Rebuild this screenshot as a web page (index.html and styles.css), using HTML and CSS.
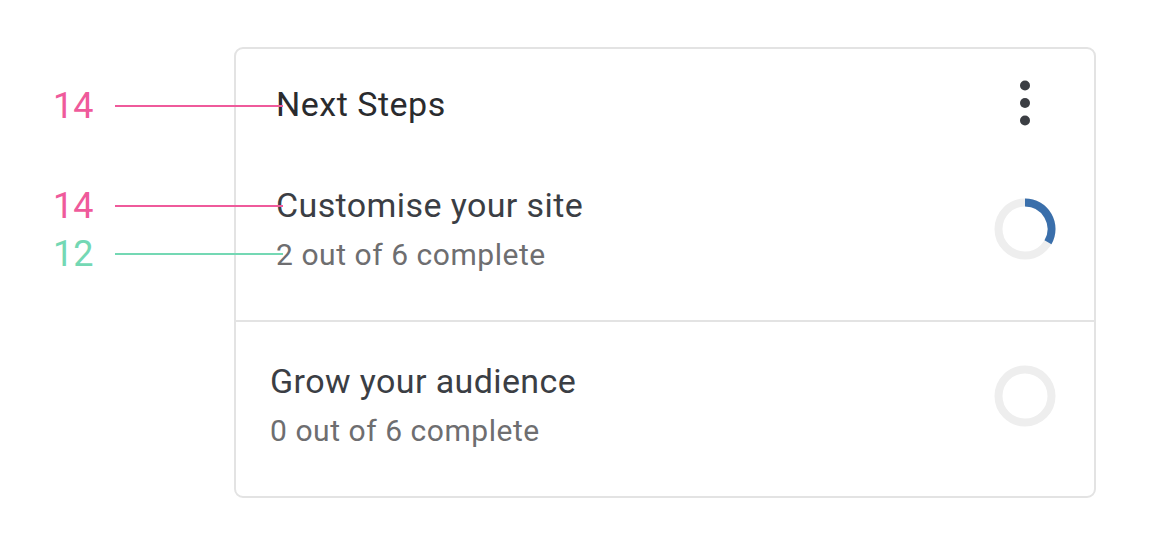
FILE: index.html
```html
<!DOCTYPE html>
<html lang="en">
  <head>
    <meta charset="UTF-8" />
    <title>Next Steps card</title>
    <link rel="stylesheet" href="styles.css">
  </head>
  <body>
    <!-- Card -->
    <section class="card">
      <header class="card-header">
        <h2 class="card-title">Next Steps</h2>
        <button class="more-btn" aria-label="More">
          <svg width="12" height="48" viewBox="0 0 12 48">
            <circle cx="6" cy="6.5" r="5" fill="#3b3e43" />
            <circle cx="6" cy="24" r="5" fill="#3b3e43" />
            <circle cx="6" cy="41.5" r="5" fill="#3b3e43" />
          </svg>
        </button>
      </header>

      <div class="step step-first">
        <div class="step-text">
          <div class="step-title">Customise your site</div>
          <div class="step-sub">2 out of 6 complete</div>
        </div>
        <svg class="ring" width="62" height="62" viewBox="0 0 62 62">
          <circle cx="31" cy="31" r="26.5" fill="none" stroke="#eeeeee" stroke-width="8" />
          <path d="M31 4.5 A26.5 26.5 0 0 1 53.95 44.25" fill="none" stroke="#3a6fab" stroke-width="8" />
        </svg>
      </div>

      <div class="step step-last">
        <div class="step-text">
          <div class="step-title">Grow your audience</div>
          <div class="step-sub">0 out of 6 complete</div>
        </div>
        <svg class="ring ring-raised" width="62" height="62" viewBox="0 0 62 62">
          <circle cx="31" cy="31" r="26.5" fill="none" stroke="#eeeeee" stroke-width="8" />
        </svg>
      </div>
    </section>

    <!-- Size annotations -->
    <div class="note note-pink note-title">
      <span class="note-num">14</span><span class="note-line"></span>
    </div>
    <div class="note note-pink note-step">
      <span class="note-num">14</span><span class="note-line"></span>
    </div>
    <div class="note note-teal note-sub">
      <span class="note-num">12</span><span class="note-line"></span>
    </div>
  </body>
</html>
```

FILE: styles.css
```css
/* Global */
* {
  margin: 0;
  padding: 0;
  box-sizing: border-box;
}
body {
  background-color: #fff;
  font-family: Roboto, "Noto Sans", Arial, sans-serif;
  padding: 47px 0 0 234px;
  position: relative;
  min-height: 100vh;
}

/* Card */
.card {
  width: 862px;
  height: 451px;
  border: 2px solid #e3e3e3;
  border-radius: 9px;
  display: flex;
  flex-direction: column;
}
.card-header {
  display: flex;
  justify-content: space-between;
  align-items: center;
  height: 75px;
  padding: 35px 38px 0 40px;
}
.card-title {
  font-size: 34px;
  line-height: 40px;
  font-weight: 400;
  letter-spacing: 0.5px;
  color: #2a2b2e;
}
.more-btn {
  width: 62px;
  height: 40px;
  display: flex;
  justify-content: center;
  align-items: center;
  border: none;
  background: none;
  position: relative;
  top: -1px;
}

/* Steps */
.step {
  display: flex;
  justify-content: space-between;
  align-items: center;
  padding: 0 38px 0 40px;
}
.step-first {
  padding-top: 61px;
  padding-bottom: 48px;
  border-bottom: 2px solid #e3e3e3;
}
.step-last {
  padding-top: 39px;
  padding-left: 34px;
}
.step-title {
  font-size: 34px;
  line-height: 40px;
  letter-spacing: 0.4px;
  color: #3b3e44;
}
.step-sub {
  font-size: 30px;
  line-height: 34px;
  letter-spacing: 0.55px;
  color: #6e6e70;
  margin-top: 13px;
}
.ring-raised {
  margin-bottom: 18px;
}

/* Annotations */
.note {
  position: absolute;
  left: 53px;
  display: flex;
  align-items: center;
}
.note-num {
  font-size: 36px;
  line-height: 40px;
  width: 62px;
}
.note-line {
  width: 168px;
  height: 2px;
}
.note-pink .note-num {
  color: #ef5a9b;
}
.note-pink .note-line {
  background-color: #ef5a9b;
}
.note-teal .note-num {
  color: #74d8b4;
}
.note-teal .note-line {
  background-color: #74d8b4;
}
.note-title {
  top: 86px;
}
.note-step {
  top: 186px;
}
.note-sub {
  top: 234px;
}
```
